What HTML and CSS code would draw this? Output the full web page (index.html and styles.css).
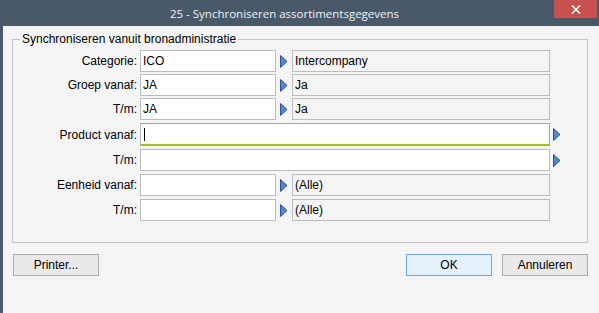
FILE: index.html
```html
<!DOCTYPE html>
<html lang="nl">
<head>
  <meta charset="UTF-8" />
  <title>25 - Synchroniseren assortimentsgegevens</title>
  <link rel="stylesheet" href="styles.css">
</head>
<body>

<div class="window">
  <div class="titlebar">
    <span class="title">25 - Synchroniseren assortimentsgegevens</span>
    <button class="btn-close" title="Sluiten">
      <svg width="10" height="9" viewBox="0 0 10 9"><path d="M1 0.5 L9 8.5 M9 0.5 L1 8.5" stroke="#fff" stroke-width="1.6"/></svg>
    </button>
  </div>

  <div class="content">
    <fieldset class="groupbox">
      <legend>Synchroniseren vanuit bronadministratie</legend>

      <div class="rows first">
        <div class="row">
          <label>Categorie:</label>
          <div class="field">ICO</div>
          <span class="arrow"><svg width="8" height="13" viewBox="0 0 8 13"><polygon points="0.5,0.5 7,6.5 0.5,12.5" /></svg></span>
          <div class="desc">Intercompany</div>
        </div>
        <div class="row">
          <label>Groep vanaf:</label>
          <div class="field">JA</div>
          <span class="arrow"><svg width="8" height="13" viewBox="0 0 8 13"><polygon points="0.5,0.5 7,6.5 0.5,12.5" /></svg></span>
          <div class="desc">Ja</div>
        </div>
        <div class="row">
          <label>T/m:</label>
          <div class="field">JA</div>
          <span class="arrow"><svg width="8" height="13" viewBox="0 0 8 13"><polygon points="0.5,0.5 7,6.5 0.5,12.5" /></svg></span>
          <div class="desc">Ja</div>
        </div>
      </div>

      <div class="rows second">
        <div class="row product">
          <label>Product vanaf:</label>
          <div class="field wide focused"><span class="caret"></span></div>
          <span class="arrow"><svg width="8" height="13" viewBox="0 0 8 13"><polygon points="0.5,0.5 7,6.5 0.5,12.5" /></svg></span>
        </div>
        <div class="row">
          <label>T/m:</label>
          <div class="field wide"></div>
          <span class="arrow"><svg width="8" height="13" viewBox="0 0 8 13"><polygon points="0.5,0.5 7,6.5 0.5,12.5" /></svg></span>
        </div>
        <div class="row">
          <label>Eenheid vanaf:</label>
          <div class="field"></div>
          <span class="arrow"><svg width="8" height="13" viewBox="0 0 8 13"><polygon points="0.5,0.5 7,6.5 0.5,12.5" /></svg></span>
          <div class="desc">(Alle)</div>
        </div>
        <div class="row">
          <label>T/m:</label>
          <div class="field"></div>
          <span class="arrow"><svg width="8" height="13" viewBox="0 0 8 13"><polygon points="0.5,0.5 7,6.5 0.5,12.5" /></svg></span>
          <div class="desc">(Alle)</div>
        </div>
      </div>
    </fieldset>

    <div class="buttons">
      <button class="btn">Printer...</button>
      <div class="right">
        <button class="btn btn-default">OK</button>
        <button class="btn">Annuleren</button>
      </div>
    </div>
  </div>
</div>

</body>
</html>
```

FILE: styles.css
```css
body {
  margin: 0;
  font-family: "Liberation Sans", Arial, sans-serif;
  font-size: 12px;
  color: #000;
  background-color: #f4f4f4;
}

.window {
  width: 599px;
  height: 313px;
  overflow: hidden;
  background-color: #f4f4f4;
  border-left: 3px solid #485a6a;
  box-sizing: border-box;
}

.titlebar {
  position: relative;
  height: 26px;
  margin-left: -3px;
  padding-right: 30px;
  background-color: #485a6a;
  text-align: center;
}

.titlebar .title {
  display: inline-block;
  padding-top: 6px;
  color: #eef2f5;
  font-family: "Open Sans", "Noto Sans", sans-serif;
  font-size: 11.5px;
  line-height: 16px;
}

.btn-close {
  position: absolute;
  top: 0;
  right: 2px;
  width: 43px;
  height: 18px;
  border: none;
  padding: 0;
  background-color: #c75050;
  display: flex;
  align-items: center;
  justify-content: center;
}

.content {
  padding: 6px 11px 0 9px;
}

.groupbox {
  margin: 0;
  padding: 0 0 21px 0;
  height: 211px;
  box-sizing: border-box;
  border: 1px solid #c4c4c4;
}

.groupbox legend {
  margin-left: 7px;
  padding: 0 2px;
  line-height: 14px;
}

.rows {
  display: flex;
  flex-direction: column;
}

.rows.first {
  margin-top: 4px;
  gap: 2px;
}

.rows.second {
  margin-top: 3px;
  gap: 3px;
}

.row {
  display: flex;
  align-items: center;
  height: 22px;
}

.row.product {
  height: 23px;
}

.row label {
  width: 124px;
  padding-right: 3px;
  text-align: right;
}

.field,
.desc {
  height: 22px;
  box-sizing: border-box;
  border: 1px solid #bcbcbc;
  padding: 0 2px;
  line-height: 20px;
  white-space: nowrap;
}

.field {
  width: 136px;
  background-color: #fff;
}

.field.wide {
  width: 410px;
}

.field.focused {
  height: 23px;
  border-color: #a7bf26;
  border-left-color: #bcbcbc;
  border-bottom-width: 2px;
  display: flex;
  align-items: center;
}

.caret {
  display: block;
  width: 1px;
  height: 13px;
  margin-left: 1px;
  background-color: #000;
}

.arrow {
  width: 16px;
  height: 13px;
  display: flex;
}

.arrow svg {
  margin-left: 4px;
}

.row .field.wide + .arrow svg {
  margin-left: 3px;
}

.arrow polygon {
  fill: #4f86d6;
  stroke: #2b4f91;
  stroke-width: 1;
}

.desc {
  width: 258px;
  background-color: #f4f4f4;
}

.buttons {
  display: flex;
  justify-content: space-between;
  margin-top: 11px;
  padding-left: 1px;
}

.buttons .right {
  display: flex;
  gap: 10px;
}

.btn {
  width: 86px;
  height: 22px;
  border: 1px solid #adadad;
  background-color: #e9e9e9;
  font-family: "Liberation Sans", Arial, sans-serif;
  font-size: 12px;
  color: #000;
  padding: 0;
}

.btn-default {
  border-color: #6ea6e3;
  background-color: #e5f1fb;
}
```
